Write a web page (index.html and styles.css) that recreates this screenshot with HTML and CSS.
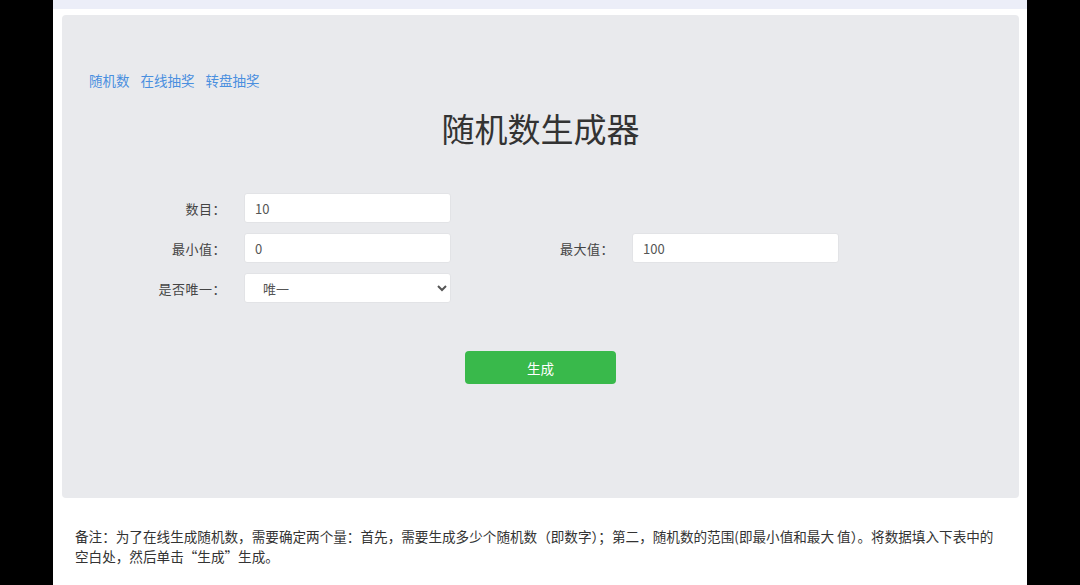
FILE: index.html
```html
<!DOCTYPE html>
<html lang="zh-CN">
<head>
<meta charset="utf-8">
<title>随机数生成器</title>
<link rel="stylesheet" href="styles.css">
</head>
<body>
<div class="page">
  <div class="topbar"></div>
  <div class="panel">
    <nav class="links">
      <a href="#">随机数</a>
      <a href="#">在线抽奖</a>
      <a href="#">转盘抽奖</a>
    </nav>
    <h1 class="title">随机数生成器</h1>
    <div class="form">
      <label class="lbl">数目：</label>
      <input class="field" type="text" value="10">
      <span></span><span></span>
      <label class="lbl">最小值：</label>
      <input class="field" type="text" value="0">
      <label class="lbl">最大值：</label>
      <input class="field" type="text" value="100">
      <label class="lbl">是否唯一：</label>
      <select class="field select">
        <option>唯一</option>
        <option>不唯一</option>
      </select>
    </div>
    <div class="actions">
      <button class="btn" type="button">生成</button>
    </div>
  </div>
  <p class="note">备注：为了在线生成随机数，需要确定两个量：首先，需要生成多少个随机数（即数字）；第二，随机数的范围(即最小值和最大 值）。将数据填入下表中的空白处，然后单击“生成”生成。</p>
</div>
</body>
</html>
```

FILE: styles.css
```css
html, body {
  margin: 0;
  padding: 0;
  background: #000;
}
body {
  font-family: "Noto Sans CJK SC", "Noto Sans", "Liberation Sans", sans-serif;
  color: #333;
}
.page {
  width: 974px;
  height: 585px;
  margin-left: 53px;
  background: #fff;
  overflow: hidden;
}
.topbar {
  height: 9px;
  background: #eceef8;
  margin-bottom: 6px;
}
.panel {
  box-sizing: border-box;
  height: 483px;
  margin: 0 8px 0 9px;
  background: #e9eaed;
  border-radius: 4px;
  padding: 55px 27px 0;
}
.links {
  display: flex;
  gap: 11px;
  line-height: 20px;
}
.links a {
  font-size: 13.5px;
  color: #4a8fdf;
  text-decoration: none;
}
.title {
  margin: 16px 0 0;
  text-align: center;
  font-size: 33px;
  font-weight: 400;
  line-height: 44px;
  color: #333;
}
.form {
  margin: 43px 0 0 31px;
  display: grid;
  grid-template-columns: 100px 207px 133px 207px;
  grid-auto-rows: 30px;
  column-gap: 24px;
  row-gap: 10px;
  align-items: center;
}
.lbl {
  justify-self: end;
  margin-right: -6px;
  text-align: right;
  font-size: 13px;
  letter-spacing: 0.5px;
  color: #444;
}
.field {
  box-sizing: border-box;
  height: 30px;
  width: 207px;
  border: 1px solid #e2e3e6;
  border-radius: 3px;
  background: #fff;
  padding: 0 10px;
  font-family: inherit;
  font-size: 13px;
  color: #555;
  outline: none;
}
.select {
  padding-left: 14px;
}
.actions {
  margin-top: 48px;
  display: flex;
  justify-content: center;
}
.btn {
  width: 151px;
  height: 33px;
  border: 0;
  border-radius: 4px;
  background: #39b94b;
  color: #fff;
  font-family: inherit;
  font-size: 13.5px;
}
.note {
  margin: 28px 0 0;
  padding: 0 30px 0 22px;
  font-size: 13.6px;
  line-height: 20px;
  color: #333;
}
```
